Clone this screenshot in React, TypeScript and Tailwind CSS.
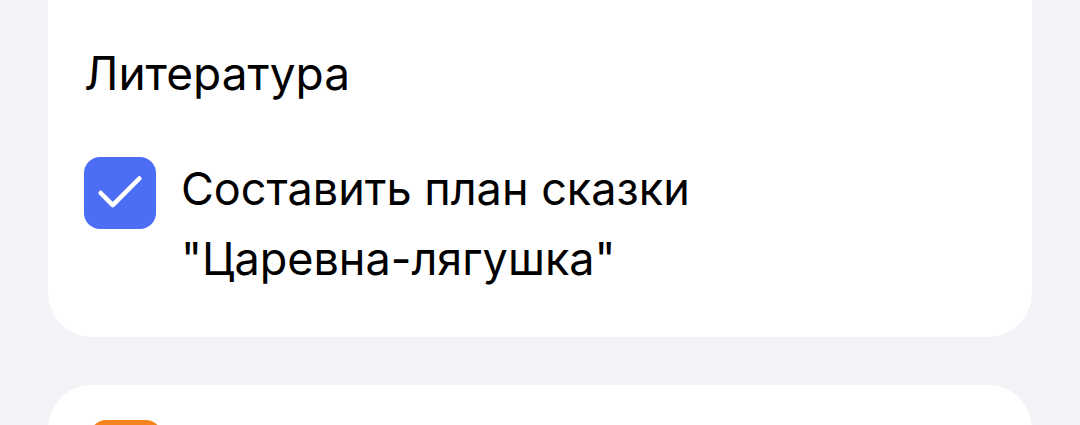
import { Check } from 'lucide-react';

function TaskRow({ text, done }: { text: string; done: boolean }) {
  return (
    <div className="flex items-start gap-[25px]">
      <div
        className={`mt-[3px] flex h-[72px] w-[72px] shrink-0 items-center justify-center rounded-[16px] ${
          done ? 'bg-[#4c6ef5]' : 'bg-[#f5841f]'
        }`}
      >
        {done && <Check className="h-[58px] w-[58px] text-white" strokeWidth={1.9} />}
      </div>
      <p className="w-[560px] text-[45px] leading-[70px] text-black">{text}</p>
    </div>
  );
}

export default function App() {
  return (
    <div className="h-[425px] w-[1080px] overflow-hidden bg-[#f2f2f7] px-[48px] font-['Inter',sans-serif]">
      <div className="flex h-[337px] flex-col rounded-b-[44px] bg-white px-[36px] pt-[47px]">
        <h2 className="text-[46px] leading-[52px] text-black">Литература</h2>
        <div className="mt-[55px]">
          <TaskRow text={'Составить план сказки "Царевна-лягушка"'} done />
        </div>
      </div>
      <div className="mt-[48px] h-[200px] rounded-t-[44px] bg-white px-[42px] pt-[35px]">
        <div className="h-[72px] w-[72px] rounded-[16px] bg-[#f5841f]" />
      </div>
    </div>
  );
}
